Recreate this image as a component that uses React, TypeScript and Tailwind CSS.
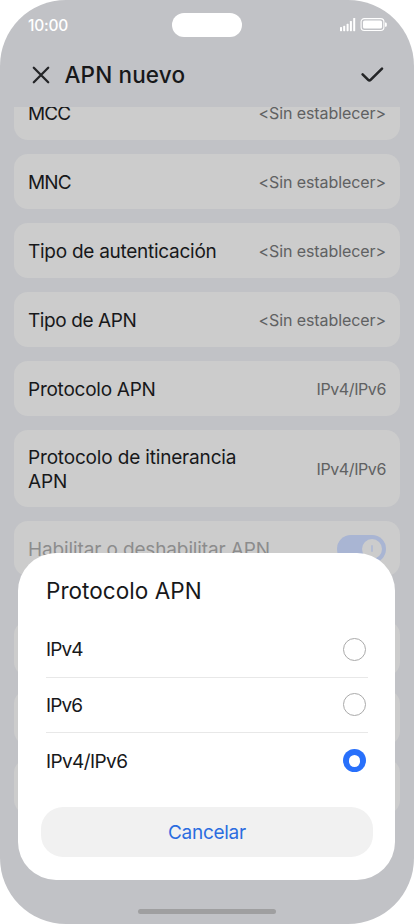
import { useState } from "react";

interface Setting {
  label: string;
  value: string;
  labelClass: string;
  valueClass: string;
  cardClass?: string;
}

const SIN = "<Sin establecer>";
const SIN_CLASS = "tracking-[-0.08px]";
const IP_CLASS = "tracking-[-0.4px]";

const SETTINGS: Setting[] = [
  { label: "MCC", value: SIN, labelClass: "tracking-[-0.9px]", valueClass: SIN_CLASS },
  { label: "MNC", value: SIN, labelClass: "tracking-[-0.9px]", valueClass: SIN_CLASS },
  { label: "Tipo de autenticación", value: SIN, labelClass: "tracking-[-0.27px]", valueClass: SIN_CLASS },
  { label: "Tipo de APN", value: SIN, labelClass: "tracking-[-0.4px]", valueClass: SIN_CLASS },
  { label: "Protocolo APN", value: "IPv4/IPv6", labelClass: "tracking-[-0.25px]", valueClass: IP_CLASS },
  {
    label: "Protocolo de itinerancia APN",
    value: "IPv4/IPv6",
    labelClass: "w-[225px] tracking-[-0.17px]",
    valueClass: IP_CLASS,
    cardClass: "h-[77px]",
  },
];

const OPTIONS = [
  { label: "IPv4", labelClass: "tracking-[-0.9px]" },
  { label: "IPv6", labelClass: "tracking-[-0.9px]" },
  { label: "IPv4/IPv6", labelClass: "tracking-[-0.6px]" },
];

function StatusBar() {
  return (
    <div className="relative flex h-[50px] shrink-0 items-center justify-between pr-[27px] pl-[28px]">
      <span className="pt-[1px] text-[15.5px] leading-none font-medium tracking-[-0.25px] text-white">10:00</span>
      <div className="absolute top-[12.5px] left-[172px] h-[24px] w-[70px] rounded-full bg-white" />
      <svg className="h-[14px] w-[47px]" viewBox="0 0 47 14" fill="white">
        <rect x="0" y="9" width="2" height="4.2" rx="0.6" />
        <rect x="3.2" y="7.8" width="2" height="5.4" rx="0.6" />
        <rect x="6.6" y="5.8" width="2" height="7.4" rx="0.6" />
        <rect x="9.9" y="3" width="2" height="10.2" rx="0.6" />
        <rect x="13.2" y="0" width="2" height="13.2" rx="0.6" />
        <rect x="21.1" y="0.6" width="22.8" height="11.9" rx="3.2" fill="none" stroke="white" strokeWidth="1.1" />
        <rect x="23" y="2.5" width="19" height="8.1" rx="1.6" />
        <path d="M45 4.4h0.5c0.8 0 1.3 0.6 1.3 1.3v1.7c0 0.8-0.5 1.3-1.3 1.3h-0.5z" />
      </svg>
    </div>
  );
}

export default function App() {
  const [selected, setSelected] = useState("IPv4/IPv6");

  return (
    <div className="relative flex h-[924px] w-[414px] flex-col overflow-hidden rounded-[66px] bg-[#c1c2c6] font-['Inter',sans-serif] text-[#17181a]">
      <StatusBar />

      {/* Header */}
      <header className="flex h-[57px] shrink-0 items-center pr-[30px] pb-[7px] pl-[32px]">
        <button type="button" aria-label="Cerrar">
          <svg className="h-[18px] w-[18px]" viewBox="0 0 18 18" fill="none" stroke="#242527" strokeWidth="2.3" strokeLinecap="round">
            <path d="M1.8 1.8 16.2 16.2M16.2 1.8 1.8 16.2" />
          </svg>
        </button>
        <h1 className="ml-[14.5px] flex-1 pt-[1px] text-[22.5px] leading-none font-medium tracking-[0.15px] whitespace-nowrap">
          APN nuevo
        </h1>
        <button type="button" aria-label="Guardar">
          <svg className="h-[18px] w-[24px]" viewBox="0 0 24 18" fill="none" stroke="#242527" strokeWidth="2.6" strokeLinecap="round" strokeLinejoin="round">
            <path d="M2.6 8.4 8.2 13.9Q9.4 15.1 10.6 13.9L22 2.6" />
          </svg>
        </button>
      </header>

      {/* Settings list, scrolled so the first card is cut by the header */}
      <main className="min-h-0 flex-1 overflow-hidden px-[14px]">
        <div className="-mt-[22px] flex flex-col gap-[14px]">
          {SETTINGS.map((s) => (
            <div
              key={s.label}
              className={`flex items-center justify-between rounded-[14px] bg-[#cccccc] px-[14px] ${s.cardClass ?? "h-[55px]"}`}
            >
              <span className={`pt-[2px] text-[19px] leading-[24px] ${s.labelClass}`}>{s.label}</span>
              <span className={`text-[16px] whitespace-nowrap text-[#606162] ${s.valueClass}`}>{s.value}</span>
            </div>
          ))}
          <div className="flex h-[55px] items-center justify-between rounded-[14px] bg-[#cccccc] px-[14px]">
            <span className="pt-[2px] text-[19px] leading-[24px] tracking-[-0.13px] whitespace-nowrap text-[#8c8c8d]">
              Habilitar o deshabilitar APN
            </span>
            <div className="flex h-[28px] w-[49px] items-center justify-end rounded-full bg-[#a9b5d3] pr-[4px]">
              <div className="flex h-[20px] w-[20px] items-center justify-center rounded-full bg-[#cccccc]">
                <div className="h-[7px] w-[2.5px] rounded-full bg-[#b4bdd3]" />
              </div>
            </div>
          </div>
          <div className="mt-[31px] h-[55px] rounded-[14px] bg-[#cccccc]" />
          <div className="h-[55px] rounded-[14px] bg-[#cccccc]" />
          <div className="h-[55px] rounded-[14px] bg-[#cccccc]" />
        </div>
      </main>

      {/* Dialog */}
      <div className="absolute top-[553.4px] left-[18.4px] flex h-[326.8px] w-[377px] flex-col rounded-[38px] bg-white px-[27.6px] pt-[22.6px]">
        <h2 className="h-[46px] text-[22.5px] leading-[29px] tracking-[0.05px] whitespace-nowrap">Protocolo APN</h2>
        <div className="divide-y divide-[#e8e8e8]">
          {OPTIONS.map((option) => (
            <button
              key={option.label}
              type="button"
              onClick={() => setSelected(option.label)}
              className="flex h-[55.6px] w-full items-center justify-between pr-[2px] text-[19px]"
            >
              <span className={`pt-[2px] ${option.labelClass}`}>{option.label}</span>
              {option.label === selected ? (
                <span className="flex h-[23px] w-[23px] items-center justify-center rounded-full bg-[#2870fb]">
                  <span className="h-[11.5px] w-[11.5px] rounded-full bg-white" />
                </span>
              ) : (
                <span className="h-[23px] w-[23px] rounded-full border border-[#aaaaaa]" />
              )}
            </button>
          ))}
        </div>
        <button
          type="button"
          className="-mx-[5px] mt-[18px] h-[50px] shrink-0 rounded-[22px] bg-[#f1f1f1] pt-[2px] text-[19px] tracking-[-0.3px] text-[#2b6de0]"
        >
          Cancelar
        </button>
      </div>

      {/* Home indicator */}
      <div className="absolute bottom-[10px] left-[138px] h-[5px] w-[138px] rounded-full bg-[#9f9fa0]" />
    </div>
  );
}
